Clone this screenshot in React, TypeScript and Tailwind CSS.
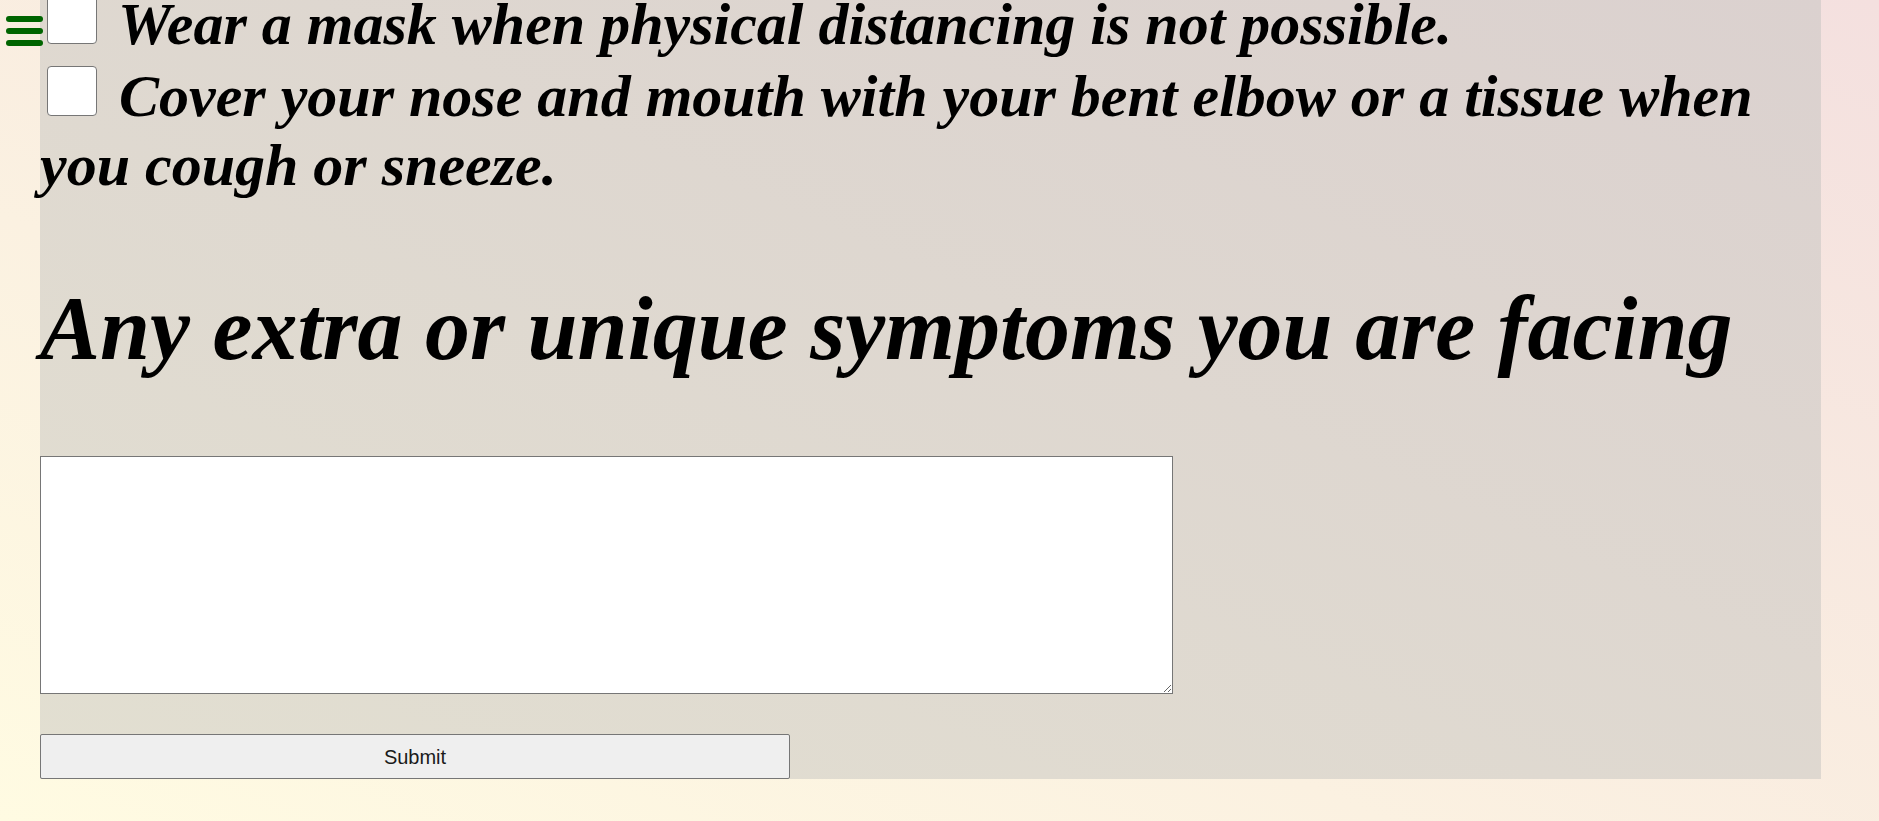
import React from "react";

const tips = [
  "Wear a mask when physical distancing is not possible.",
  "Cover your nose and mouth with your bent elbow or a tissue when you cough or sneeze.",
];

const App = () => {
  return (
    <div className="relative h-[821px] overflow-hidden bg-linear-to-tr from-[#fffbe2] to-[#f4e0df] font-['Liberation_Serif',serif]">
      {/* nav toggle */}
      <button className="absolute left-[6px] top-[16px] z-10 flex w-[37px] flex-col gap-[6px]" aria-label="menu">
        <span className="h-[6px] w-full rounded-full bg-[#006400]" />
        <span className="h-[6px] w-full rounded-full bg-[#006400]" />
        <span className="h-[6px] w-full rounded-full bg-[#006400]" />
      </button>

      <div className="ml-[40px] w-[1781px] bg-linear-to-tr from-[#e2dfd1] to-[#dbd1cf]">
        <div className="-mt-[10px] text-[60px] font-bold italic leading-[69px] text-black">
          {tips.map((tip, i) => (
            <label key={tip} className={i > 0 ? "mt-[3px] block" : "block"}>
              <input
                type="checkbox"
                className="ml-[7px] mr-[7px] h-[50px] w-[50px] appearance-none rounded-[4px] border border-[#767676] bg-white align-baseline"
              />{" "}
              {tip}
            </label>
          ))}
        </div>

        <h1 className="mt-[77px] whitespace-nowrap text-[90px] font-bold italic leading-[104px] text-black">
          Any extra or unique symptoms you are facing
        </h1>

        <textarea className="mt-[75px] block h-[238px] w-[1133px] border border-[#767676] bg-white" />

        <button className="mt-[40px] block h-[45px] w-[750px] rounded-[2px] border border-[#767676] bg-[#efefef] font-['Liberation_Sans',sans-serif] text-[20px] text-[#1a1a1a]">
          Submit
        </button>
      </div>
    </div>
  );
};

export default App;
